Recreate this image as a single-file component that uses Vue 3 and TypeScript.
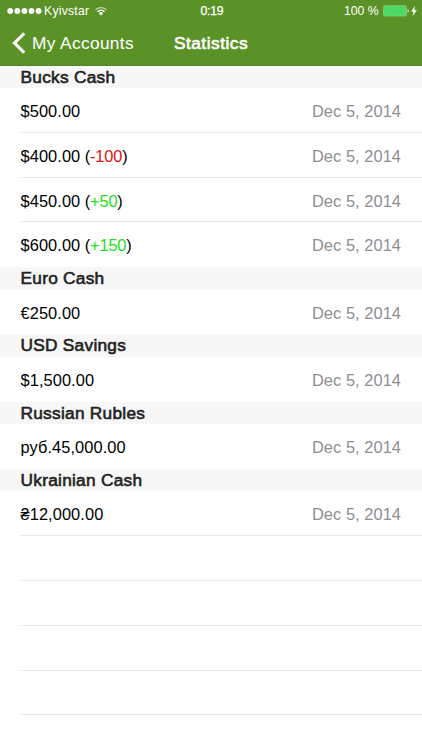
<script setup lang="ts">
interface Entry {
  amount: string
  change?: string
}
interface Account {
  name: string
  entries: Entry[]
}

const date = 'Dec 5, 2014'
const accounts: Account[] = [
  {
    name: 'Bucks Cash',
    entries: [
      { amount: '$500.00' },
      { amount: '$400.00', change: '-100' },
      { amount: '$450.00', change: '+50' },
      { amount: '$600.00', change: '+150' },
    ],
  },
  { name: 'Euro Cash', entries: [{ amount: '€250.00' }] },
  { name: 'USD Savings', entries: [{ amount: '$1,500.00' }] },
  { name: 'Russian Rubles', entries: [{ amount: 'руб.45,000.00' }] },
  { name: 'Ukrainian Cash', entries: [{ amount: '₴12,000.00' }] },
]
</script>

<template>
  <div class="screen">
    <header class="top">
      <div class="status">
        <div class="carrier">
          <svg class="dots" width="35" height="8" viewBox="0 0 35 8">
            <circle v-for="n in 5" :key="n" :cx="3.2 + (n - 1) * 7.1" cy="4" r="2.9" fill="#fff" />
          </svg>
          <span class="network">Kyivstar</span>
          <svg class="wifi" width="12" height="10" viewBox="0 0 12 10" fill="none" stroke="#fff">
            <path d="M.6 3.8A7.7 7.7 0 0 1 11.4 3.8" stroke-width="1.3" opacity=".6" />
            <path d="M2.5 5.8A5 5 0 0 1 9.5 5.8" stroke-width="1.6" />
            <path d="M6 9.4 3.7 7.2A3.2 3.2 0 0 1 8.3 7.2Z" fill="#fff" stroke="none" />
          </svg>
        </div>
        <span class="time">0:19</span>
        <div class="power">
          <span>100 %</span>
          <svg class="battery" width="26" height="12" viewBox="0 0 26 12">
            <rect x=".5" y=".7" width="23" height="10.3" rx="1.4" fill="#4cd964" stroke="#8fc982" stroke-width=".8" />
            <path d="M24.5 4.2q1.3.4 1.3 1.7t-1.3 1.7z" fill="#dcebd0" />
          </svg>
          <svg class="bolt" width="6" height="10" viewBox="0 0 6 10">
            <path d="M3.9.1.2 5.5h2.3L1.7 9.9 5.8 4.2H3.4z" fill="#fff" />
          </svg>
        </div>
      </div>
      <nav class="nav">
        <div class="back">
          <svg width="14" height="22" viewBox="0 0 14 22" fill="none">
            <path d="M12.2 1.4 2.5 11l9.7 9.6" stroke="#fff" stroke-width="3.1" />
          </svg>
          <span>My Accounts</span>
        </div>
        <h1>Statistics</h1>
      </nav>
    </header>
    <main>
      <section v-for="account in accounts" :key="account.name">
        <h2>{{ account.name }}</h2>
        <div v-for="entry in account.entries" :key="entry.amount" class="row">
          <span class="amount">{{ entry.amount }}<span v-if="entry.change" class="delta"> (<span :class="entry.change.startsWith('-') ? 'loss' : 'gain'">{{ entry.change }}</span>)</span></span>
          <span class="date">{{ date }}</span>
        </div>
      </section>
      <div v-for="n in 4" :key="n" class="row blank"></div>
    </main>
  </div>
</template>

<style>
body {
  margin: 0;
  background: #fff;
}
</style>

<style scoped>
.screen {
  width: 422px;
  height: 750px;
  overflow: hidden;
  background: #fff;
  color: #000;
  font-family: "Liberation Sans", Arial, sans-serif;
  font-size: 16.4px;
}
.top {
  box-sizing: border-box;
  height: 65.6px;
  background: #5b9227;
  border-bottom: 1px solid #568429;
  color: #fff;
}
.status {
  display: grid;
  grid-template-columns: 1fr auto 1fr;
  align-items: center;
  height: 22px;
  padding: 0 5px 0 7px;
  font-size: 12.2px;
}
.carrier,
.power {
  display: flex;
  align-items: center;
}
.network {
  margin-left: 2px;
  letter-spacing: 0.25px;
}
.wifi {
  margin-left: 6px;
}
.time {
  letter-spacing: -0.2px;
  -webkit-text-stroke: 0.25px currentColor;
}
.power {
  justify-content: flex-end;
}
.battery {
  margin-left: 4px;
}
.bolt {
  margin-left: 2.5px;
}
.nav {
  display: grid;
  grid-template-columns: 1fr auto 1fr;
  align-items: center;
  height: 42px;
  padding: 0 12px;
}
.back {
  display: flex;
  align-items: center;
  gap: 6px;
  font-size: 17.3px;
  letter-spacing: 0.37px;
  white-space: nowrap;
}
h1 {
  margin: 0;
  font-size: 17.3px;
  font-weight: 400;
  letter-spacing: 0.5px;
  -webkit-text-stroke: 0.6px currentColor;
}
h2 {
  box-sizing: border-box;
  height: 22.42px;
  margin: 0;
  padding-left: 20.5px;
  background: #f7f7f7;
  color: #222;
  font-size: 17.3px;
  font-weight: 400;
  letter-spacing: 0.26px;
  line-height: 23px;
  -webkit-text-stroke: 0.6px currentColor;
}
.row {
  position: relative;
  display: flex;
  justify-content: space-between;
  box-sizing: border-box;
  height: 44.82px;
  padding: 0 21px 0 20.5px;
  line-height: 46px;
}
.row::after {
  content: "";
  position: absolute;
  right: 0;
  bottom: 0;
  left: 20.5px;
  height: 1px;
  background: #e7e7e9;
}
section:not(:last-of-type) .row:last-child::after {
  display: none;
}
.amount {
  letter-spacing: 0.08px;
}
.delta {
  letter-spacing: -0.16px;
}
.date {
  color: #8e8e93;
  letter-spacing: 0.06px;
}
.loss {
  color: #e01217;
}
.gain {
  color: #20df20;
}
</style>
